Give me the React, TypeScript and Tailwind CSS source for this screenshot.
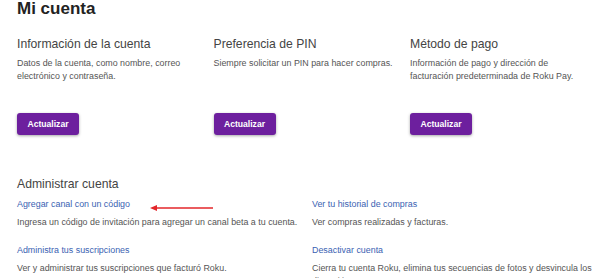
// Roku "Mi cuenta" account page

type Card = {
    title: string;
    text: string;
};

type AdminItem = {
    link: string;
    text: string;
};

const cards: Card[] = [
    { title: "Información de la cuenta", text: "Datos de la cuenta, como nombre, correo electrónico y contraseña." },
    { title: "Preferencia de PIN", text: "Siempre solicitar un PIN para hacer compras." },
    { title: "Método de pago", text: "Información de pago y dirección de facturación predeterminada de Roku Pay." },
];

const adminItems: AdminItem[] = [
    { link: "Agregar canal con un código", text: "Ingresa un código de invitación para agregar un canal beta a tu cuenta." },
    { link: "Ver tu historial de compras", text: "Ver compras realizadas y facturas." },
    { link: "Administra tus suscripciones", text: "Ver y administrar tus suscripciones que facturó Roku." },
    { link: "Desactivar cuenta", text: "Cierra tu cuenta Roku, elimina tus secuencias de fotos y desvincula los dispositivos." },
];

function RedArrow() {
    return (
        <svg className="absolute left-[133px] top-[6px]" width="64" height="8" viewBox="0 0 64 8">
            <line x1="5" y1="4" x2="63" y2="4" stroke="#e3262a" strokeWidth="1.6" />
            <polygon points="0,4 7,1 7,7" fill="#e3262a" />
        </svg>
    );
}

export default function App(): React.ReactElement {
    return (
        <div className="w-[600px] h-[278px] overflow-hidden bg-white pl-[17px] font-['Liberation_Sans',Arial,sans-serif]">
            <h1 className="text-[17px] leading-[18px] font-bold text-[#222]">Mi cuenta</h1>

            {/* top cards */}
            <div className="flex mt-[18px]">
                {cards.map((card, idx) => (
                    <div key={idx} className="w-[196.5px] shrink-0 flex flex-col">
                        <h2 className="text-[12.2px] leading-[16px] text-[#444]">{card.title}</h2>
                        <p className="mt-[5px] h-[56px] w-[180px] text-[8.9px] leading-[13px] text-[#555]">{card.text}</p>
                        <button className="w-[62px] h-[22px] rounded-[3px] bg-[#6d1f9e] text-white text-[8.6px] font-bold shadow-[0_1px_3px_rgba(0,0,0,0.35)]">
                            Actualizar
                        </button>
                    </div>
                ))}
            </div>

            {/* administrar cuenta */}
            <h2 className="mt-[41px] text-[12.2px] leading-[16px] text-[#444]">Administrar cuenta</h2>
            <div className="grid grid-cols-[295px_1fr] mt-[5.5px] gap-y-[15px]">
                {adminItems.map((item, idx) => (
                    <div key={idx} className="relative pr-[4px]">
                        <a className="block text-[8.9px] leading-[13px] text-[#3a62b2] cursor-pointer">{item.link}</a>
                        <p className="mt-[5px] text-[8.9px] leading-[13px] text-[#555]">{item.text}</p>
                        {idx === 0 && <RedArrow />}
                    </div>
                ))}
            </div>
        </div>
    );
}
